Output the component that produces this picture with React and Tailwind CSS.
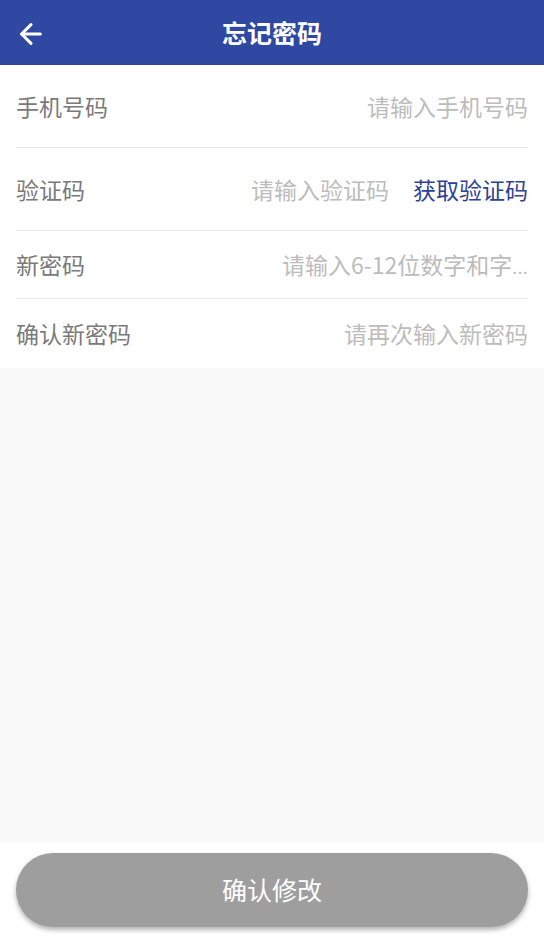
import { ArrowLeft } from "lucide-react";

const font = { fontFamily: '"Noto Sans CJK SC", "Roboto", sans-serif' };

function Row({ label, placeholder, height, action, last }) {
  return (
    <div className={`flex items-center mx-4 ${height} ${last ? "" : "border-b border-[#e8e8e8]"}`}>
      <span className="text-[23px] text-[#7a7a7a] shrink-0">{label}</span>
      <span className="flex-1" />
      <span className="text-right text-[23px] text-[#bcbcbc] whitespace-nowrap">{placeholder}</span>
      {action && <span className="ml-6 text-[23px] text-[#2d4294] shrink-0">{action}</span>}
    </div>
  );
}

export default function App() {
  return (
    <div className="w-[544px] h-[951px] flex flex-col bg-[#f9f9f9]" style={font}>
      <div className="h-[65px] bg-[#2f48a1] flex items-center relative shrink-0">
        <button className="absolute left-[15px] top-[18px] text-white">
          <ArrowLeft size={32} strokeWidth={2.3} />
        </button>
        <h1 className="flex-1 text-center text-white text-[25px] font-bold">忘记密码</h1>
      </div>

      <div className="bg-white shrink-0">
        <Row label="手机号码" placeholder="请输入手机号码" height="h-[83px]" />
        <Row label="验证码" placeholder="请输入验证码" action="获取验证码" height="h-[83px]" />
        <Row
          label="新密码"
          placeholder={<>请输入6-12位数字和字<span className="font-['Roboto'] text-[20px]">...</span></>}
          height="h-[68px]"
        />
        <Row label="确认新密码" placeholder="请再次输入新密码" height="h-[69px]" last />
      </div>

      <div className="flex-1" />

      <div className="bg-white h-[108px] shrink-0 px-4 pt-[10px]">
        <button className="w-full h-[74px] rounded-full bg-[#9e9e9e] text-white text-[25px] shadow-[0_3px_5px_rgba(0,0,0,0.3)]">
          确认修改
        </button>
      </div>
    </div>
  );
}
